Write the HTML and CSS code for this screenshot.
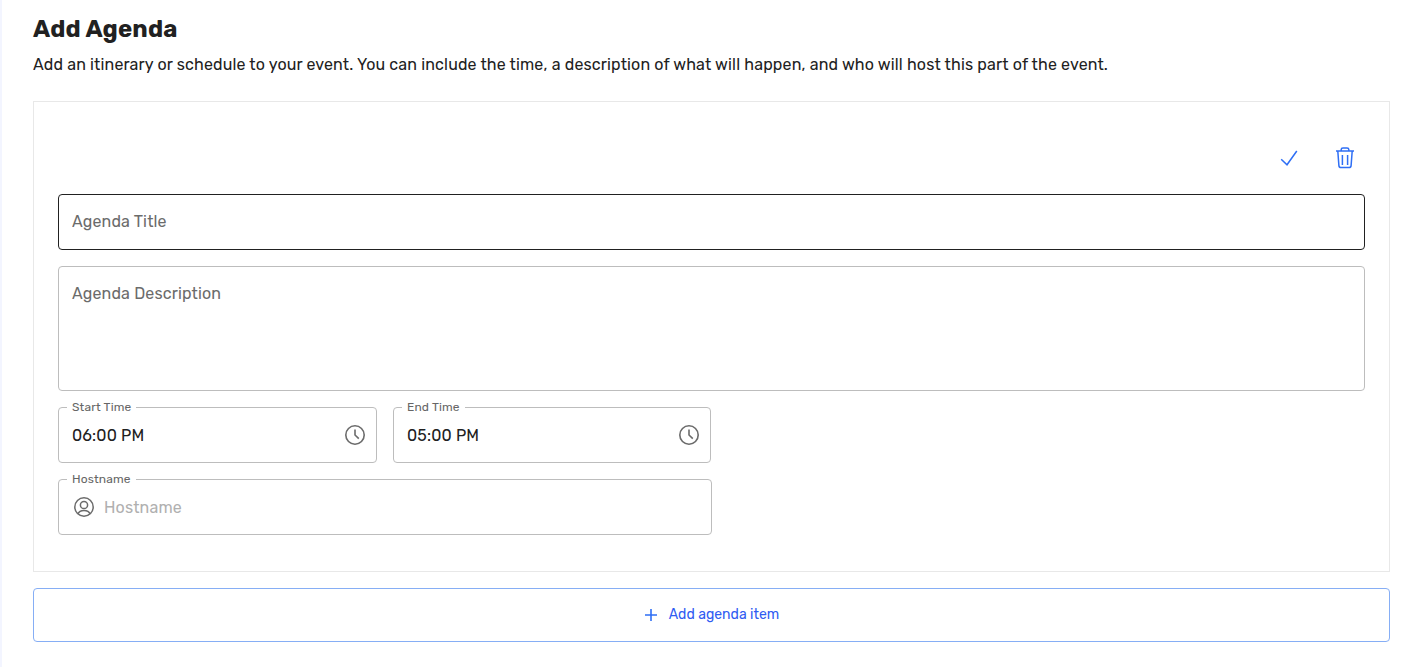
FILE: index.html
```html
<!DOCTYPE html>
<html lang="en">
<head>
<meta charset="utf-8">
<title>Add Agenda</title>
<link rel="stylesheet" href="styles.css">
</head>
<body>
<main class="page">
  <h1 class="title">Add Agenda</h1>
  <p class="intro">Add an itinerary or schedule to your event. You can include the time, a description of what will happen, and who will host this part of the event.</p>
  <section class="card">
    <div class="actions">
      <button class="icon-btn" type="button" aria-label="Save">
        <svg width="24" height="24" viewBox="0 0 24 24" fill="none" stroke="#2f6ff5" stroke-width="1.5"><path d="M4.2 13.2 10 18.8 19.8 5"/></svg>
      </button>
      <button class="icon-btn" type="button" aria-label="Delete">
        <svg width="24" height="24" viewBox="0 0 24 24" fill="none" stroke="#2f6ff5" stroke-width="1.5" stroke-linejoin="round"><path d="M3 5H21M8.2 5V3.6Q8.2 2 10 2H14Q15.8 2 15.8 3.6V5M4.8 5 5.9 19.6Q6.1 21.6 8 21.6H16Q17.9 21.6 18.1 19.6L19.2 5M9.4 9V19M14.6 9V19"/></svg>
      </button>
    </div>
    <div class="form">
      <input class="box box-title" type="text" placeholder="Agenda Title">
      <textarea class="box box-desc" placeholder="Agenda Description"></textarea>
      <div class="time-row">
        <div class="field">
          <span class="legend">Start Time</span>
          <span class="value">06:00 PM</span>
          <svg class="clock" width="24" height="24" viewBox="0 0 24 24" fill="none" stroke="#6b6b6b" stroke-width="1.6"><circle cx="12" cy="12" r="9.2"/><path d="M12 6.4V12L15.8 15.6"/></svg>
        </div>
        <div class="field">
          <span class="legend">End Time</span>
          <span class="value">05:00 PM</span>
          <svg class="clock" width="24" height="24" viewBox="0 0 24 24" fill="none" stroke="#6b6b6b" stroke-width="1.6"><circle cx="12" cy="12" r="9.2"/><path d="M12 6.4V12L15.8 15.6"/></svg>
        </div>
      </div>
      <div class="field field-host">
        <span class="legend">Hostname</span>
        <svg class="user" width="22" height="22" viewBox="0 0 22 22" fill="none" stroke="#6b6b6b" stroke-width="1.5"><circle cx="11" cy="11" r="9.2"/><circle cx="11" cy="9" r="3.6"/><path d="M5 17.8Q6.2 14.4 11 14.4T17 17.8"/></svg>
        <span class="placeholder">Hostname</span>
      </div>
    </div>
  </section>
  <button class="add" type="button">
    <svg width="14" height="14" viewBox="0 0 14 14" fill="none" stroke="#2f6ff5" stroke-width="1.6"><path d="M7 1V13M1 7H13"/></svg>
    <span>Add agenda item</span>
  </button>
</main>
</body>
</html>
```

FILE: styles.css
```css
* { box-sizing: border-box; }
html, body { margin: 0; background: #fff; }
body { font-family: Rubik, Roboto, sans-serif; color: #212121; height: 667px; overflow: hidden; }
.page { height: 667px; padding: 14px 26px 0 31px; border-left: 2px solid #f3f5ff; }
.title { margin: 0; font-size: 24px; line-height: 30px; font-weight: 700; letter-spacing: 0.15px; color: #212121; }
.intro { margin: 9px 0 0; font-size: 16px; line-height: 24px; letter-spacing: 0.15px; color: #212121; }
.card { margin-top: 24px; height: 471px; border: 1px solid #e8e8e8; padding: 32px 24px 0; }
.actions { display: flex; justify-content: flex-end; gap: 32px; height: 48px; padding: 0 8px 0 0; }
.icon-btn { width: 24px; height: 48px; padding: 0; border: 0; background: none; display: flex; align-items: center; justify-content: center; }
.form { margin-top: 12px; display: flex; flex-direction: column; gap: 16px; }
.box { display: block; width: 100%; font: 400 16px/24px Rubik, Roboto, sans-serif; letter-spacing: 0.15px; color: #212121; background: #fff; border-radius: 4px; outline: 0; }
.box::placeholder { color: #6b6b6b; opacity: 1; }
.box-title { height: 56px; padding: 0 13px 2px; border: 1px solid #212121; }
.box-desc { height: 125px; padding: 15px 13px; border: 1px solid #bdbdbd; resize: none; }
.time-row { display: grid; grid-template-columns: 319px 318px; gap: 16px; }
.field { position: relative; height: 56px; display: flex; align-items: center; border: 1px solid #bdbdbd; border-radius: 4px; padding: 0 9px 0 13px; }
.field-host { width: 654px; padding-left: 14px; gap: 9px; }
.legend { position: absolute; left: 8px; top: -7px; padding: 0 5px; background: #fff; font-size: 12px; line-height: 13px; letter-spacing: 0.15px; color: #666; }
.value { flex: 1; font-size: 16px; letter-spacing: 0.15px; color: #212121; }
.placeholder { font-size: 16px; letter-spacing: 0.15px; color: #b0b0b0; }
.add { display: flex; align-items: center; justify-content: center; gap: 11px; width: 1357px; height: 54px; margin-top: 16px; border: 1px solid #86aef5; border-radius: 4px; background: #fff; color: #2f5cf2; font: 400 14px/20px Rubik, Roboto, sans-serif; }
```
